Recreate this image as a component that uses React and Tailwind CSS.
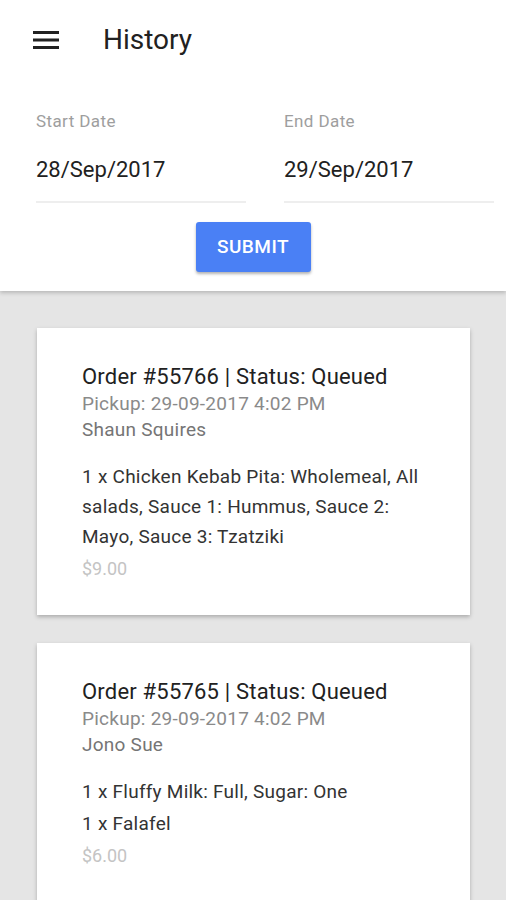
import React from 'react';

const orders = [
    {
        id: 55766,
        status: 'Queued',
        pickup: '29-09-2017 4:02 PM',
        customer: 'Shaun Squires',
        items: ['1 x Chicken Kebab Pita: Wholemeal, All salads, Sauce 1: Hummus, Sauce 2: Mayo, Sauce 3: Tzatziki'],
        total: '$9.00',
    },
    {
        id: 55765,
        status: 'Queued',
        pickup: '29-09-2017 4:02 PM',
        customer: 'Jono Sue',
        items: ['1 x Fluffy Milk: Full, Sugar: One', '1 x Falafel'],
        total: '$6.00',
    },
];

const DateField = ({ label, value }) => (
    <div className="w-[210px] shrink-0">
        <div className="text-[17px] leading-[20px] tracking-[0.4px] text-[#9e9e9e]">{label}</div>
        <div className="mt-[25px] text-[22px] leading-[28px] text-[#212121]">{value}</div>
        <div className="mt-[17px] h-[2px] bg-[#eeeeee]" />
    </div>
);

const OrderCard = ({ order }) => (
    <div className="bg-white shadow-[0_2px_4px_rgba(0,0,0,0.25)] px-[45px] pt-[35px] pb-[31px]">
        <div className="text-[22px] leading-[28px] tracking-[0.2px] text-[#212121]">
            Order #{order.id} | Status: {order.status}
        </div>
        <div className="text-[19px] leading-[26px] tracking-[0.25px] text-[#8a8a8a]">Pickup: {order.pickup}</div>
        <div className="text-[19px] leading-[25px] tracking-[0.25px] text-[#757575]">{order.customer}</div>
        <div className="mt-[20px]">
            {order.items.map((item, i) => (
                <div key={i} className="text-[19px] leading-[30px] tracking-[0.25px] text-[#333333] mb-[2px]">{item}</div>
            ))}
        </div>
        <div className="mt-[1px] text-[18px] leading-[30px] text-[#c4c4c4]">{order.total}</div>
    </div>
);

const App = () => {
    return (
        <div className="min-h-[900px] bg-[#e5e5e5] font-['Roboto',sans-serif]">
            {/* Top section */}
            <div className="bg-white shadow-[0_2px_4px_rgba(0,0,0,0.2)] relative pb-[19px]">
                <div className="h-[80px] flex items-center">
                    <svg width="26" height="18" viewBox="0 0 26 18" className="ml-[33px]">
                        <rect x="0" y="0" width="26" height="3" fill="#212121" />
                        <rect x="0" y="7.5" width="26" height="3" fill="#212121" />
                        <rect x="0" y="15" width="26" height="3" fill="#212121" />
                    </svg>
                    <h1 className="ml-[44px] text-[28px] text-[#212121]">History</h1>
                </div>
                <div className="flex gap-[38px] pl-[36px] pr-[12px] pt-[31px]">
                    <DateField label="Start Date" value="28/Sep/2017" />
                    <DateField label="End Date" value="29/Sep/2017" />
                </div>
                <div className="flex justify-center mt-[19px]">
                    <button className="w-[115px] h-[50px] rounded-[3px] bg-[#4a80f5] text-white text-[19px] font-medium tracking-[0.5px] shadow-[0_2px_3px_rgba(0,0,0,0.3)]">
                        SUBMIT
                    </button>
                </div>
            </div>

            {/* Orders */}
            <div className="flex flex-col gap-[28px] pl-[37px] pr-[36px] pt-[37px] pb-[30px]">
                {orders.map((order) => (
                    <OrderCard key={order.id} order={order} />
                ))}
            </div>
        </div>
    );
};

export default App;
